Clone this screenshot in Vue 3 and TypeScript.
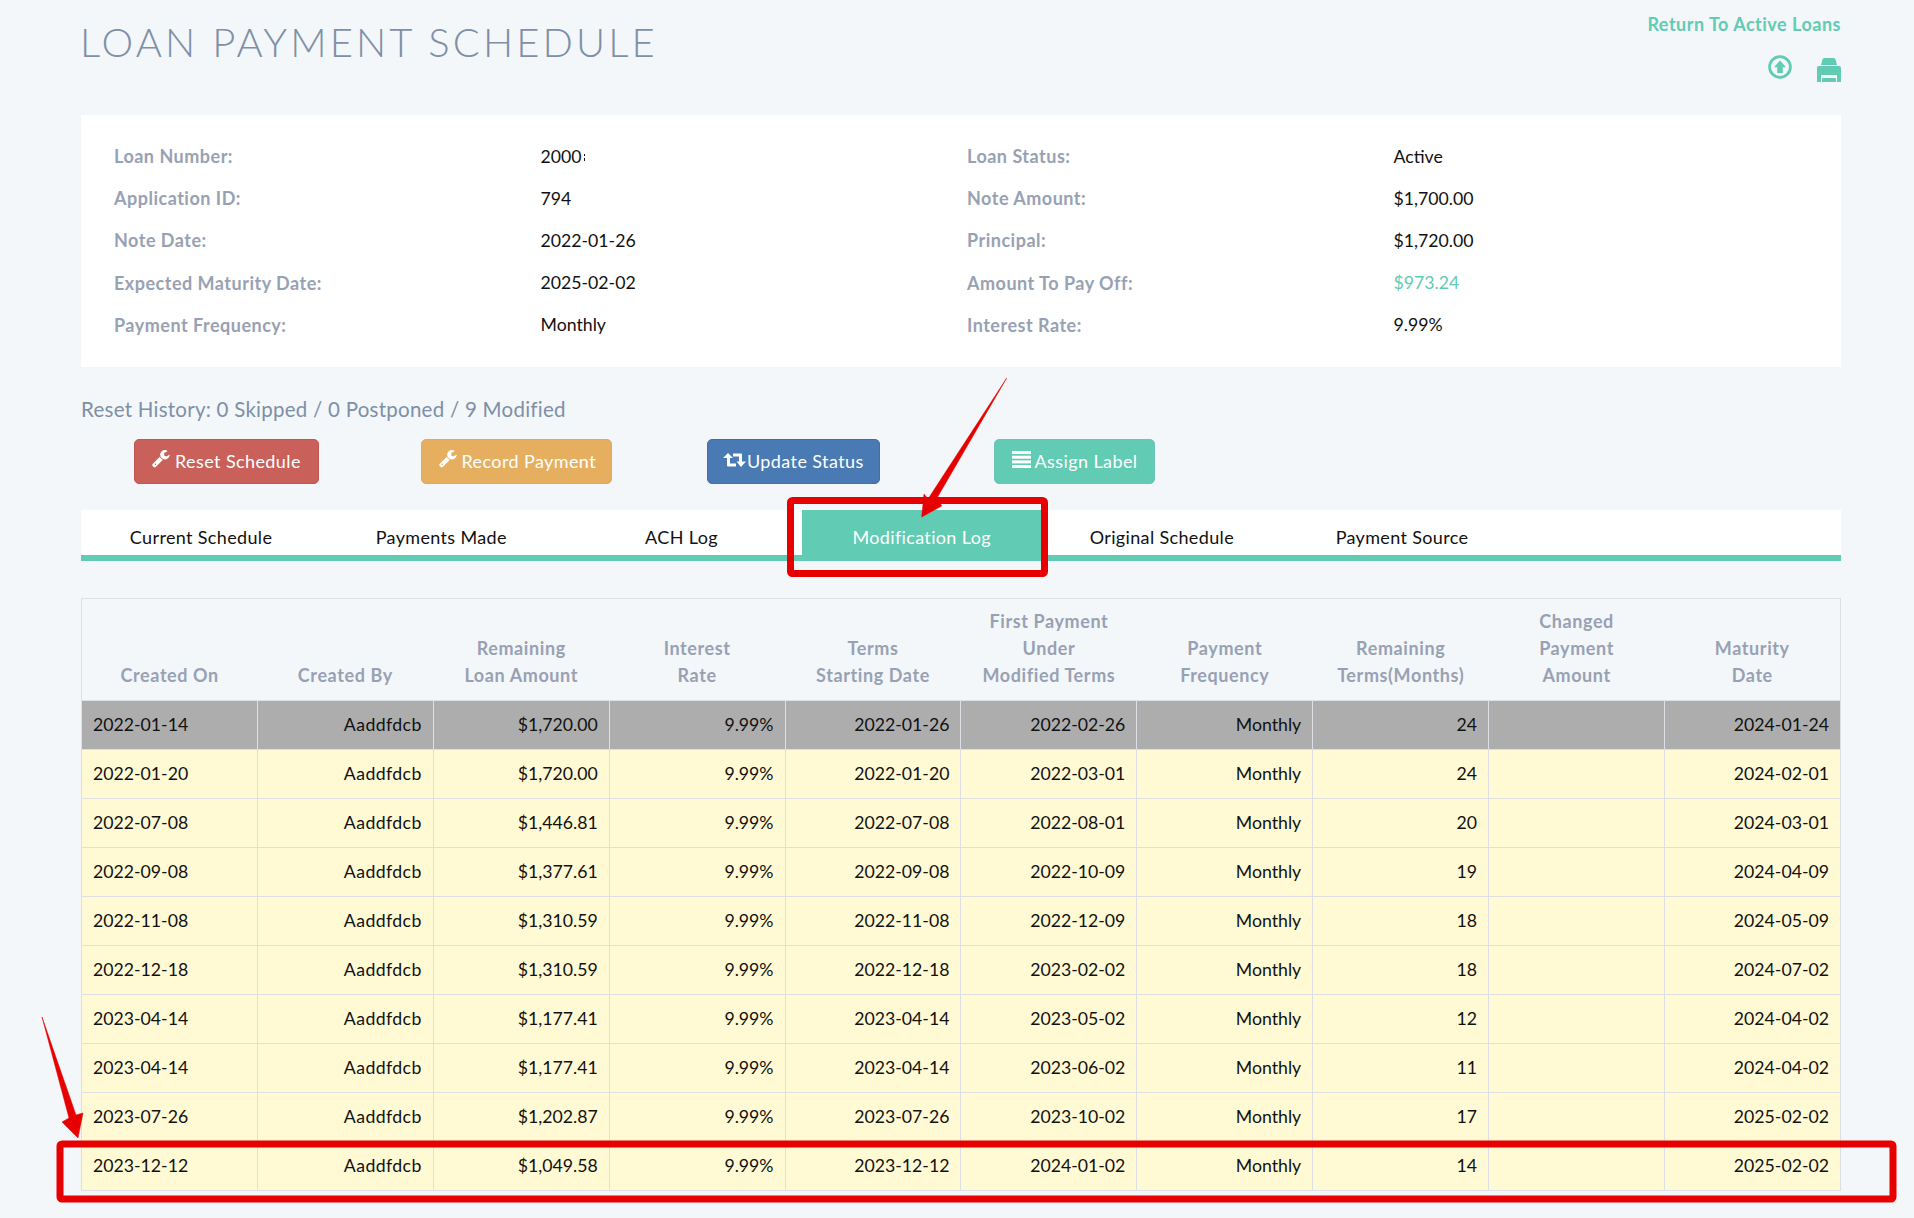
<script setup lang="ts">
interface Row {
  on: string
  amount: string
  start: string
  first: string
  terms: string
  maturity: string
  base?: boolean
}

const infoRows: { label: string; value: string; partial?: boolean; accent?: boolean }[] = [
  { label: 'Loan Number:', value: '2000', partial: true },
  { label: 'Loan Status:', value: 'Active' },
  { label: 'Application ID:', value: '794' },
  { label: 'Note Amount:', value: '$1,700.00' },
  { label: 'Note Date:', value: '2022-01-26' },
  { label: 'Principal:', value: '$1,720.00' },
  { label: 'Expected Maturity Date:', value: '2025-02-02' },
  { label: 'Amount To Pay Off:', value: '$973.24', accent: true },
  { label: 'Payment Frequency:', value: 'Monthly' },
  { label: 'Interest Rate:', value: '9.99%' }
]

const tabs = ['Current Schedule', 'Payments Made', 'ACH Log', 'Modification Log', 'Original Schedule', 'Payment Source']

const headers: string[][] = [
  ['Created On'],
  ['Created By'],
  ['Remaining', 'Loan Amount'],
  ['Interest', 'Rate'],
  ['Terms', 'Starting Date'],
  ['First Payment', 'Under', 'Modified Terms'],
  ['Payment', 'Frequency'],
  ['Remaining', 'Terms(Months)'],
  ['Changed', 'Payment', 'Amount'],
  ['Maturity', 'Date']
]

const rows: Row[] = [
  { on: '2022-01-14', amount: '$1,720.00', start: '2022-01-26', first: '2022-02-26', terms: '24', maturity: '2024-01-24', base: true },
  { on: '2022-01-20', amount: '$1,720.00', start: '2022-01-20', first: '2022-03-01', terms: '24', maturity: '2024-02-01' },
  { on: '2022-07-08', amount: '$1,446.81', start: '2022-07-08', first: '2022-08-01', terms: '20', maturity: '2024-03-01' },
  { on: '2022-09-08', amount: '$1,377.61', start: '2022-09-08', first: '2022-10-09', terms: '19', maturity: '2024-04-09' },
  { on: '2022-11-08', amount: '$1,310.59', start: '2022-11-08', first: '2022-12-09', terms: '18', maturity: '2024-05-09' },
  { on: '2022-12-18', amount: '$1,310.59', start: '2022-12-18', first: '2023-02-02', terms: '18', maturity: '2024-07-02' },
  { on: '2023-04-14', amount: '$1,177.41', start: '2023-04-14', first: '2023-05-02', terms: '12', maturity: '2024-04-02' },
  { on: '2023-04-14', amount: '$1,177.41', start: '2023-04-14', first: '2023-06-02', terms: '11', maturity: '2024-04-02' },
  { on: '2023-07-26', amount: '$1,202.87', start: '2023-07-26', first: '2023-10-02', terms: '17', maturity: '2025-02-02' },
  { on: '2023-12-12', amount: '$1,049.58', start: '2023-12-12', first: '2024-01-02', terms: '14', maturity: '2025-02-02' }
]
</script>

<template>
  <div class="page">
    <header class="top">
      <h1 class="title">LOAN PAYMENT SCHEDULE</h1>
      <div class="top-actions">
        <a class="return">Return To Active Loans</a>
        <div class="top-icons">
          <svg class="ic-up" viewBox="0 0 24 24">
            <circle cx="12" cy="12" r="10.4" fill="none" stroke="currentColor" stroke-width="2.8" />
            <path d="M12 5.6 18 12.2H14.8V18H9.2V12.2H6Z" fill="currentColor" />
          </svg>
          <svg class="ic-print" viewBox="0 0 24 24">
            <path d="M7 0H17Q18 0 18.5 1.5L20 7H4L5.5 1.5Q6 0 7 0Z" fill="currentColor" />
            <path d="M2 8H22Q24 8 24 10V24H20V17H4V24H0V10Q0 8 2 8Z" fill="currentColor" />
            <path d="M6 20H18Q19 20 19 21V24H5V21Q5 20 6 20Z" fill="currentColor" />
          </svg>
        </div>
      </div>
    </header>

    <section class="card">
      <div v-for="item in infoRows" :key="item.label" class="info-pair">
        <span class="info-label">{{ item.label }}</span>
        <span class="info-value" :class="{ partial: item.partial, accent: item.accent }">{{ item.value }}</span>
      </div>
    </section>

    <p class="history">Reset History: 0 Skipped / 0 Postponed / 9 Modified</p>

    <div class="actions">
      <div class="action-cell">
        <button class="btn red">
          <svg class="ic-wrench" viewBox="0 0 1792 1792"><path d="M384 1344q0-26-19-45t-45-19-45 19-19 45 19 45 45 19 45-19 19-45zm644-420l-682 682q-37 37-90 37-52 0-91-37l-106-108q-38-36-38-90 0-53 38-91l681-681q39 98 114.5 173.5t173.5 114.5zm634-435q0 39-23 106-47 134-164.5 217.5t-258.5 83.5q-185 0-316.5-131.5t-131.5-316.5 131.5-316.5 316.5-131.5q58 0 121.5 16.5t107.5 46.5q16 11 16 28t-16 28l-293 169v224l193 107q5-3 79-48.5t135.5-81 70.5-35.5q15 0 23.5 10t8.5 25z" fill="currentColor" /></svg>
          Reset Schedule
        </button>
      </div>
      <div class="action-cell">
        <button class="btn orange">
          <svg class="ic-wrench" viewBox="0 0 1792 1792"><path d="M384 1344q0-26-19-45t-45-19-45 19-19 45 19 45 45 19 45-19 19-45zm644-420l-682 682q-37 37-90 37-52 0-91-37l-106-108q-38-36-38-90 0-53 38-91l681-681q39 98 114.5 173.5t173.5 114.5zm634-435q0 39-23 106-47 134-164.5 217.5t-258.5 83.5q-185 0-316.5-131.5t-131.5-316.5 131.5-316.5 316.5-131.5q58 0 121.5 16.5t107.5 46.5q16 11 16 28t-16 28l-293 169v224l193 107q5-3 79-48.5t135.5-81 70.5-35.5q15 0 23.5 10t8.5 25z" fill="currentColor" /></svg>
          Record Payment
        </button>
      </div>
      <div class="action-cell">
        <button class="btn blue">
          <svg class="ic-retweet" viewBox="0 0 23 14">
            <path d="M0 5 5 0 10 5H7V10.5H13V13.5H5Q4 13.5 4 12.5V5Z" fill="currentColor" />
            <path d="M10 .5H18Q19 .5 19 1.5V8.5H23L18 14 13.5 8.5H16V3.5H10Z" fill="currentColor" />
          </svg>
          Update Status
        </button>
      </div>
      <div class="action-cell">
        <button class="btn teal">
          <svg class="ic-bars" viewBox="0 0 19 17">
            <rect y="0" width="19" height="3" fill="currentColor" />
            <rect y="4.7" width="19" height="3" fill="currentColor" />
            <rect y="9.4" width="19" height="3" fill="currentColor" />
            <rect y="14" width="19" height="3" fill="currentColor" />
          </svg>
          Assign Label
        </button>
      </div>
    </div>

    <nav class="tabs">
      <a v-for="tab in tabs" :key="tab" class="tab" :class="{ active: tab === 'Modification Log' }">{{ tab }}</a>
    </nav>

    <table class="log">
      <thead>
        <tr>
          <th v-for="h in headers" :key="h.join()">
            <span v-for="line in h" :key="line" class="th-line">{{ line }}</span>
          </th>
        </tr>
      </thead>
      <tbody>
        <tr v-for="(r, i) in rows" :key="i" :class="{ base: r.base }">
          <td class="left">{{ r.on }}</td>
          <td class="name">Aaddfdcb</td>
          <td>{{ r.amount }}</td>
          <td>9.99%</td>
          <td>{{ r.start }}</td>
          <td>{{ r.first }}</td>
          <td>Monthly</td>
          <td>{{ r.terms }}</td>
          <td></td>
          <td>{{ r.maturity }}</td>
        </tr>
      </tbody>
    </table>

    <svg class="marks" viewBox="0 0 1914 1218" width="1914" height="1218">
      <rect class="mark-box" x="790.5" y="500.5" width="254" height="73" rx="2" />
      <rect class="mark-box" x="60" y="1144" width="1833" height="55" rx="2" />
      <path class="mark-arrow" d="M1006.7 378 937 498 941.7 506 921.7 517 924 494 928 499Z" />
      <path class="mark-arrow" d="M42 1017 76 1115 83 1113 78 1138 62 1122 69 1118Z" />
    </svg>
  </div>
</template>

<style scoped>
.page {
  position: relative;
  box-sizing: border-box;
  width: 1914px;
  height: 1218px;
  overflow: hidden;
  padding: 0 73px 0 81px;
  background: #f3f7fa;
  color: #111;
  font-family: Lato, "Liberation Sans", sans-serif;
  font-size: 18px;
}
.top {
  display: flex;
  justify-content: space-between;
  align-items: flex-start;
  height: 115px;
}
.title {
  margin: 18px 0 0 -1px;
  font-size: 40px;
  line-height: 48px;
  font-weight: 300;
  letter-spacing: 3.1px;
  color: #7e8fa6;
}
.top-actions {
  display: flex;
  flex-direction: column;
  align-items: flex-end;
  color: #61cbb3;
}
.return {
  margin-top: 13px;
  line-height: 22px;
  font-weight: 700;
  letter-spacing: 0.5px;
}
.top-icons {
  display: flex;
  align-items: flex-start;
  gap: 25px;
  margin-top: 20px;
}
.ic-up {
  width: 24px;
  height: 24px;
}
.ic-print {
  width: 24px;
  height: 24px;
  margin-top: 3px;
}
.card {
  display: grid;
  grid-template-columns: 853px 1fr;
  grid-auto-rows: 42.2px;
  height: 252px;
  box-sizing: border-box;
  padding: 20px 33px;
  background: #fff;
}
.info-pair {
  display: grid;
  grid-template-columns: 426.5px 1fr;
  align-items: center;
}
.info-label {
  font-weight: 700;
  letter-spacing: 0.5px;
  color: #98a1b3;
}
.info-value {
  font-size: 17.7px;
  color: #111;
}
.info-value.partial::after {
  content: "";
  display: inline-block;
  width: 1.5px;
  height: 9px;
  margin-left: 2px;
  background: repeating-linear-gradient(#111 0 2.5px, transparent 2.5px 4.5px);
}
.info-value.accent {
  color: #61cbb3;
}
.history {
  margin: 30px 0 18px;
  line-height: 24px;
  font-size: 20.5px;
  letter-spacing: 0.25px;
  color: #7e8fa6;
}
.actions {
  display: grid;
  grid-template-columns: repeat(4, 286.5px);
  padding-left: 53px;
  height: 45px;
}
.action-cell {
  display: flex;
}
.btn {
  display: inline-flex;
  align-items: center;
  gap: 4px;
  box-sizing: border-box;
  height: 45px;
  padding: 0 0 2px 17px;
  border: 1px solid transparent;
  border-radius: 5px;
  color: #fff;
  font: inherit;
  letter-spacing: 0.4px;
}
.red {
  width: 185px;
  background: #c9605a;
  border-color: #c25651;
}
.orange {
  width: 191px;
  background: #e6af5f;
  border-color: #e3a956;
}
.blue {
  width: 173px;
  padding-left: 15px;
  background: #4a7ab3;
  border-color: #427099;
}
.teal {
  width: 161px;
  background: #61cbb3;
  border-color: #6cc3bd;
}
.ic-wrench {
  width: 19px;
  height: 19px;
  margin-top: -3px;
}
.ic-retweet {
  width: 23px;
  height: 14px;
  margin-top: -2px;
  margin-right: -3px;
}
.ic-bars {
  width: 19px;
  height: 17px;
  margin-top: -3px;
}
.tabs {
  display: flex;
  margin-top: 26px;
  height: 45px;
  background: #fff;
  border-bottom: 6px solid #61cbb3;
}
.tab {
  width: 240.2px;
  height: 45px;
  line-height: 54.5px;
  text-align: center;
  letter-spacing: 0.35px;
  color: #111;
}
.tab.active {
  background: #61cbb3;
  color: #fff;
}
.log {
  width: 1760px;
  margin-top: 37px;
  table-layout: fixed;
  border-collapse: collapse;
}
.log th {
  height: 90px;
  padding: 0 8px 11px;
  border: 1px solid #dcdfe3;
  border-width: 1px 0 1px 0;
  vertical-align: bottom;
  font-weight: 700;
  letter-spacing: 0.6px;
  color: #98a1b3;
}
.log th:first-child {
  border-left-width: 1px;
}
.log th:last-child {
  border-right-width: 1px;
}
.th-line {
  display: block;
  line-height: 26.9px;
}
.log td {
  height: 46px;
  padding: 0 11px 2px;
  border: 1px solid #dcdfe3;
  background: #fffad4;
  text-align: right;
  font-size: 17.7px;
  color: #111;
}
.log td.left {
  text-align: left;
}
.log td.name {
  letter-spacing: 0.4px;
}
.log tr.base td {
  background: #adadad;
}
.marks {
  position: absolute;
  left: 0;
  top: 0;
  pointer-events: none;
}
.mark-box {
  fill: none;
  stroke: #e60000;
  stroke-width: 7;
}
.mark-arrow {
  fill: #e60000;
  stroke: #e60000;
  stroke-width: 0.5;
  stroke-linejoin: round;
}
</style>
